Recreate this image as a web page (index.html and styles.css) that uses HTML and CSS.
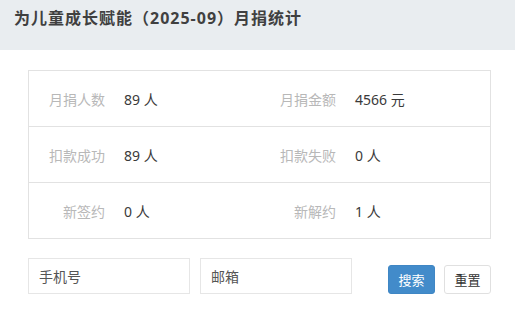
FILE: index.html
```html
<!DOCTYPE html>
<html>
	<head>
		<meta charset="UTF-8">
		<title>月捐统计</title>
		<link rel="stylesheet" href="styles.css">
	</head>
	<body>
		<div class="header">
			<h3 class="title">为儿童成长赋能（2025-09）月捐统计</h3>
		</div>
		<div class="content">
			<div class="stats">
				<div class="row">
					<span class="label">月捐人数</span><span class="value">89 人</span>
					<span class="label">月捐金额</span><span class="value">4566 元</span>
				</div>
				<div class="row">
					<span class="label">扣款成功</span><span class="value">89 人</span>
					<span class="label">扣款失败</span><span class="value">0 人</span>
				</div>
				<div class="row">
					<span class="label">新签约</span><span class="value">0 人</span>
					<span class="label">新解约</span><span class="value">1 人</span>
				</div>
			</div>
			<div class="search">
				<input class="field field-phone" type="text" placeholder="手机号">
				<input class="field field-mail" type="text" placeholder="邮箱">
				<div class="btns">
					<button class="btn btn-primary">搜索</button>
					<button class="btn">重置</button>
				</div>
			</div>
		</div>
	</body>
</html>
```

FILE: styles.css
```css
body{
	margin: 0;
	padding: 0;
	font-family: "Noto Sans", "Noto Sans CJK SC", sans-serif;
	color: #333;
	background: #fff;
}
.header{
	height: 50px;
	background-color: #e9edf0;
	padding: 8px 0 0 14px;
	box-sizing: border-box;
}
.title{
	margin: 0;
	font-size: 16px;
	line-height: 20px;
	font-weight: bold;
	letter-spacing: 1px;
	color: #404040;
}
.content{
	padding: 20px 24px 0 28px;
}
.stats{
	border: 1px solid #e2e2e2;
}
.row{
	display: grid;
	grid-template-columns: 86px 145px 86px 145px;
	align-items: center;
	height: 55px;
	border-bottom: 1px solid #e2e2e2;
	font-size: 14px;
}
.row:last-child{
	border-bottom: none;
}
.label{
	text-align: right;
	padding-right: 10px;
	color: #b8b8b8;
}
.value{
	padding-left: 9px;
	color: #3a3a3a;
}
.search{
	display: flex;
	align-items: flex-end;
	margin-top: 19px;
}
.field{
	box-sizing: border-box;
	height: 36px;
	border: 1px solid #e6e6e6;
	padding: 0 10px;
	font-family: inherit;
	font-size: 14px;
	color: #333;
	outline: none;
}
.field::placeholder{
	color: #555;
}
.field-phone{
	width: 162px;
	margin-right: 10px;
}
.field-mail{
	width: 152px;
}
.btns{
	margin-left: auto;
	display: flex;
	gap: 9px;
}
.btn{
	box-sizing: border-box;
	width: 47px;
	height: 29px;
	padding: 0;
	border: 1px solid #e0e0e0;
	border-radius: 3px;
	background: #fff;
	color: #333;
	font-family: inherit;
	font-size: 13px;
}
.btn-primary{
	background: #428bca;
	border-color: #3f86c4;
	color: #fff;
}
```
